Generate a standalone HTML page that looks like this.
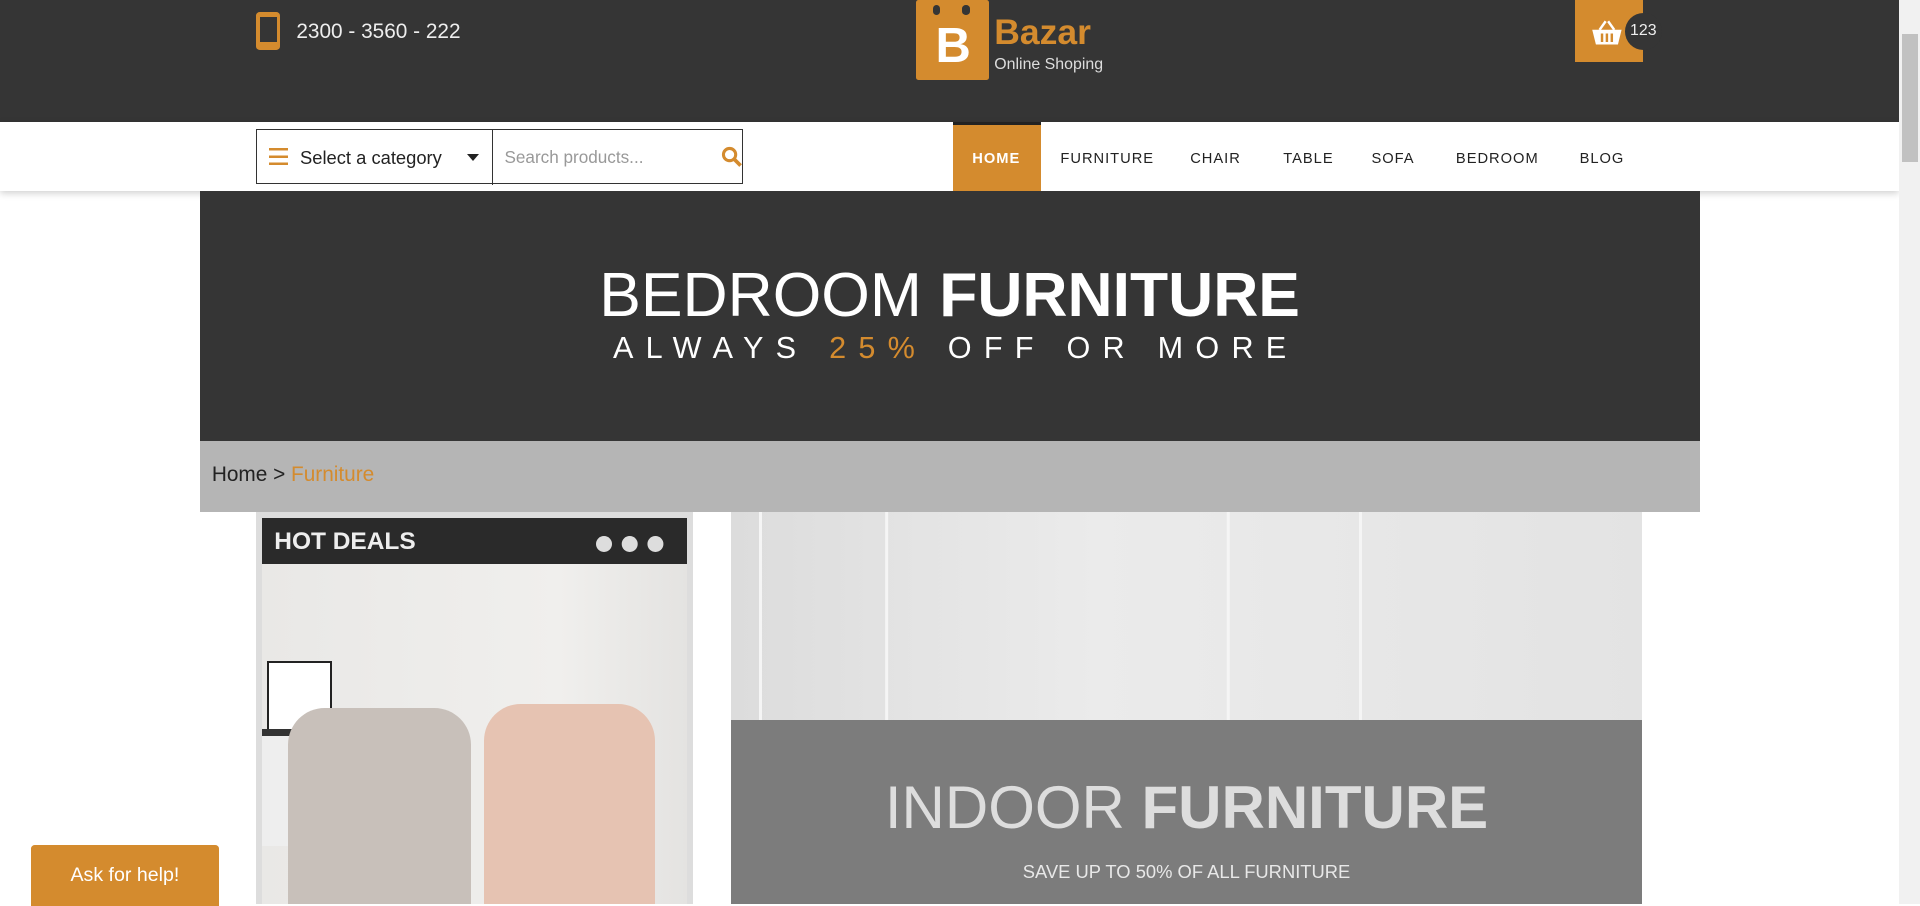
<!DOCTYPE html>
<html><head><meta charset="utf-8"><style>
html{zoom:1.2245}
body{margin:0;width:1568px;height:738px;overflow:hidden;position:relative;font-family:"Liberation Sans",sans-serif;background:#fff}
.a{position:absolute}
.hdr{left:0;top:0;width:1551px;height:100px;background:#353535}
.nav{left:0;top:100px;width:1551px;height:56px;background:#fff;box-shadow:0 2px 6px rgba(0,0,0,.2)}
.menu span{position:absolute;top:123px;font-size:12px;letter-spacing:.8px;color:#222}
</style></head><body>
<div class="a hdr"></div>
<div class="a" style="left:209px;top:10px;width:20px;height:31px;background:#d48b2e;border-radius:3px"><div style="position:absolute;left:3px;top:4px;width:14px;height:20px;background:#353535"></div></div>
<div class="a" style="left:242px;top:16px;color:#eee;font-size:17px">2300 - 3560 - 222</div>
<div class="a" style="left:748px;top:0;width:60px;height:65px;background:#d48b2e;border-radius:2px"><div style="position:absolute;left:14px;top:4px;width:6px;height:8px;border-radius:3px;background:#353535"></div><div style="position:absolute;left:38px;top:4px;width:6px;height:8px;border-radius:3px;background:#353535"></div><div style="position:absolute;left:16px;top:18px;color:#fff;font-weight:bold;font-size:40px;line-height:40px">B</div></div>
<div class="a" style="left:812px;top:10px;color:#d48b2e;font-weight:bold;font-size:29px">Bazar</div>
<div class="a" style="left:812px;top:46px;color:#ddd;font-size:13px">Online Shoping</div>
<div class="a" style="left:1286px;top:0;width:56px;height:51px;background:#d48b2e"><svg width="26" height="22" viewBox="0 0 26 22" style="position:absolute;left:13px;top:16px"><path d="M1 8h24l-3 12H4z" fill="#fff"/><path d="M7 8l5-7M19 8l-5-7" stroke="#fff" stroke-width="2"/><path d="M9 11v7M13 11v7M17 11v7" stroke="#d48b2e" stroke-width="2"/></svg></div>
<div class="a" style="left:1327px;top:11px;width:30px;height:30px;border-radius:50%;background:#353535;color:#eee;font-size:13px;line-height:30px;text-align:center">123</div>
<div class="a nav"></div>
<div class="a" style="left:209px;top:105px;width:396px;height:44px;border:1px solid #333"></div>
<div class="a" style="left:402px;top:105px;width:1px;height:46px;background:#333"></div>
<div class="a" style="left:220px;top:121px;width:15px;height:14px;background:repeating-linear-gradient(#d48b2e 0 2px,transparent 2px 6px)"></div>
<div class="a" style="left:245px;top:120px;font-size:15px;color:#222">Select a category</div>
<div class="a" style="left:381px;top:126px;border:5px solid transparent;border-top:6px solid #222"></div>
<div class="a" style="left:412px;top:120px;font-size:14px;color:#999">Search products...</div>
<svg class="a" style="left:589px;top:119px" width="18" height="18"><circle cx="7" cy="7" r="5" stroke="#d48b2e" stroke-width="2.5" fill="none"/><path d="M11 11l5 5" stroke="#d48b2e" stroke-width="3"/></svg>
<div class="a" style="left:778px;top:100px;width:72px;height:56px;background:#d48b2e;border-top:3px solid #222;box-sizing:border-box"></div>
<div class="menu"><span style="left:794px;color:#fff;font-weight:bold">HOME</span><span style="left:866px">FURNITURE</span><span style="left:972px">CHAIR</span><span style="left:1048px">TABLE</span><span style="left:1120px">SOFA</span><span style="left:1189px">BEDROOM</span><span style="left:1290px">BLOG</span></div>
<div class="a" style="left:163px;top:156px;width:1225px;height:204px;background:#353535"></div>
<div class="a" style="left:163px;top:211px;width:1225px;text-align:center;color:#fff;font-size:51px;line-height:62px"><span style="font-weight:300">BEDROOM</span> <b>FURNITURE</b></div>
<div class="a" style="left:168px;top:270px;width:1225px;text-align:center;color:#fff;font-size:25px;letter-spacing:10px">ALWAYS <span style="color:#d48b2e">25%</span> OFF OR MORE</div>
<div class="a" style="left:163px;top:360px;width:1225px;height:58px;background:#b5b5b5"></div>
<div class="a" style="left:173px;top:378px;font-size:17px;color:#222">Home &gt; <span style="color:#d48b2e">Furniture</span></div>
<div class="a" style="left:209px;top:418px;width:357px;height:320px;background:#ddd"></div>
<div class="a" style="left:214px;top:423px;width:347px;height:38px;background:#2a2a2a"></div>
<div class="a" style="left:224px;top:431px;color:#eee;font-weight:bold;font-size:20px">HOT DEALS</div>
<div class="a" style="left:487px;top:438px;width:13px;height:13px;border-radius:50%;background:#ddd;box-shadow:21px 0 #ddd,42px 0 #ddd"></div>
<div class="a" style="left:214px;top:461px;width:347px;height:277px;background:linear-gradient(90deg,#e9e8e6,#f0efed 70%,#e4e3e1)"></div>
<div class="a" style="left:218px;top:540px;width:50px;height:60px;background:#fff;border:2px solid #222"></div>
<div class="a" style="left:214px;top:595px;width:128px;height:90px;background:#eee;border-top:6px solid #333"></div>
<div class="a" style="left:235px;top:578px;width:150px;height:160px;background:#c8c0ba;border-radius:30px 30px 0 0"></div>
<div class="a" style="left:395px;top:575px;width:140px;height:163px;background:#e6c3b2;border-radius:30px 30px 0 0"></div>
<div class="a" style="left:597px;top:418px;width:744px;height:320px;background:linear-gradient(90deg,#dcdcdc,#ebebeb 40%,#e3e3e3)"></div>
<div class="a" style="left:620px;top:418px;width:2px;height:170px;background:#f5f5f5;box-shadow:103px 0 #f5f5f5,382px 0 #f5f5f5,490px 0 #f5f5f5"></div>
<div class="a" style="left:597px;top:588px;width:744px;height:150px;background:#7c7c7c"></div>
<div class="a" style="left:597px;top:629px;width:744px;text-align:center;color:#ddd;font-size:49px;line-height:62px"><span style="font-weight:300">INDOOR</span> <b>FURNITURE</b></div>
<div class="a" style="left:597px;top:703px;width:744px;text-align:center;color:#e8e8e8;font-size:15px">SAVE UP TO 50% OF ALL FURNITURE</div>
<div class="a" style="left:25px;top:690px;width:154px;height:50px;background:#d48b2e;border-radius:3px 3px 0 0;color:#fff;font-size:16px;line-height:50px;text-align:center">Ask for help!</div>
<div class="a" style="left:1551px;top:0;width:17px;height:738px;background:#f1f1f1"></div>
<div class="a" style="left:1553px;top:28px;width:13px;height:104px;background:#c1c1c1"></div>
</body></html>
